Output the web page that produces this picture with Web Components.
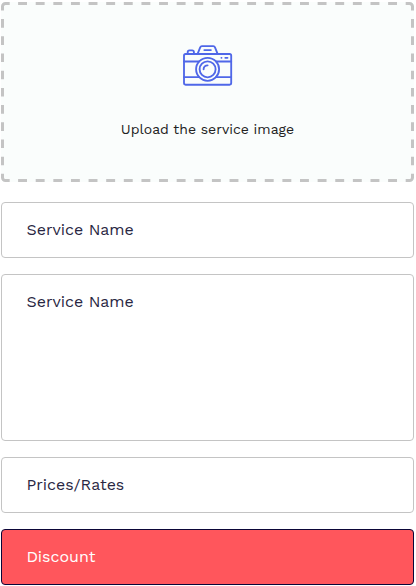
<!DOCTYPE html>
<html lang="en">
<head>
<meta charset="utf-8">
<title>Service form</title>
<style>
body { margin: 0; background: #fff; font-family: "Work Sans", Roboto, "Liberation Sans", sans-serif; }
</style>
</head>
<body>
<service-form></service-form>
<script>
class CameraIcon extends HTMLElement {
  constructor() {
    super();
    this.attachShadow({ mode: "open" }).innerHTML = `
      <style>
        :host { display: block; width: 51px; height: 42px; }
        svg { display: block; }
      </style>
      <svg width="51" height="42" viewBox="182 44 51 42" fill="none" stroke="#4f67e8" stroke-width="1.85" stroke-linecap="round" stroke-linejoin="round">
        <rect x="184" y="54" width="47.2" height="30.7" rx="1.6"/>
        <path d="M184 61.5h14.8M216.2 61.5h15M184 77.1h15.1M215.9 77.1h15.3"/>
        <circle cx="207.6" cy="69.3" r="11.5"/>
        <circle cx="207.6" cy="69.3" r="8"/>
        <path d="M203.6 69.3a4 4 0 0 1 4-4"/>
        <path d="M197.6 53.8l2.6-6.4q.5-1.2 1.7-1.2h11.4q1.2 0 1.7 1.2l2.6 6.4M204.3 50.1h6.6"/>
        <path d="M187.7 53.6v-1.5q0-1.8 1.8-1.8h2.6q1.8 0 1.8 1.8v1.5"/>
        <path d="M221.4 57.8h.1M225.3 57.8h2.2"/>
      </svg>`;
  }
}
customElements.define("camera-icon", CameraIcon);

class UploadBox extends HTMLElement {
  constructor() {
    super();
    this.attachShadow({ mode: "open" }).innerHTML = `
      <style>
        :host { display: flex; flex-direction: column; align-items: center; box-sizing: border-box; position: relative;
          height: 180px; padding-top: 42px; border-radius: 4px; background: #fafdfc; }
        .frame { position: absolute; inset: 0; }
        .label { margin-top: 33px; font-size: 14px; line-height: 20px; color: #222; white-space: nowrap; }
      </style>
      <svg class="frame" width="413" height="180" fill="none" stroke="#c4c4c4" stroke-width="3">
        <path stroke-dasharray="8.9 8.72" d="M17.1 1.5H400M17.1 178.5H400"/>
        <path stroke-dasharray="8.6 8.6" d="M1.5 17.1V168M411.5 17.1V168"/>
        <path d="M1.5 8.4V4.5a3 3 0 0 1 3-3h4.2M404.7 1.5h3.8a3 3 0 0 1 3 3v3.9M411.5 171.8v3.7a3 3 0 0 1-3 3h-3.8M8.7 178.5H4.5a3 3 0 0 1-3-3v-3.7"/>
      </svg>
      <camera-icon></camera-icon>
      <span class="label"><slot></slot></span>`;
  }
}
customElements.define("upload-box", UploadBox);

class FormField extends HTMLElement {
  constructor() {
    super();
    this.attachShadow({ mode: "open" }).innerHTML = `
      <style>
        :host { display: block; box-sizing: border-box; height: 56px; padding: 16px 24.4px;
          border: 1px solid #c4c4c4; border-radius: 4px; background: #fff; color: #292743;
          font-size: 16px; line-height: 22px; }
        :host([multiline]) { height: 167px; }
        :host([active]) { background: #ff565c; border-color: #0b0638; color: #fff; }
      </style>
      <slot></slot>`;
  }
}
customElements.define("form-field", FormField);

class ServiceForm extends HTMLElement {
  constructor() {
    super();
    this.attachShadow({ mode: "open" }).innerHTML = `
      <style>
        :host { display: flex; flex-direction: column; gap: 16px; padding: 2px 2px 1px 1px; }
        upload-box { margin-bottom: 4px; }
      </style>
      <upload-box>Upload the service image</upload-box>
      <form-field>Service Name</form-field>
      <form-field multiline>Service Name</form-field>
      <form-field>Prices/Rates</form-field>
      <form-field active>Discount</form-field>`;
  }
}
customElements.define("service-form", ServiceForm);
</script>
</body>
</html>
